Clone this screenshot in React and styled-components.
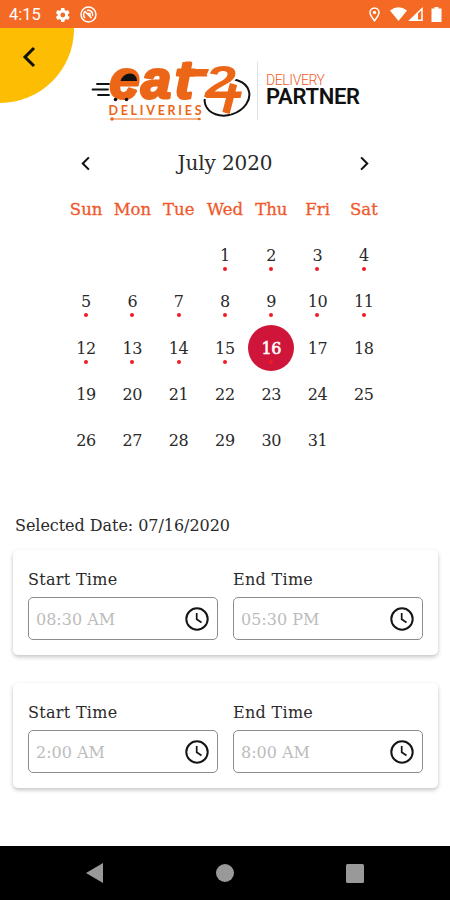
import { useState } from 'react';
import styled, { createGlobalStyle } from 'styled-components';

const colors = {
  main: '#f46a25',
  logo: '#ec6618',
  accent: '#fdbd02',
  weekday: '#f0592a',
  selected: '#d0153a',
  dot: '#f01c24',
  text: '#2a2a2a',
  placeholder: '#bcbcbc',
  border: '#8c8c8c',
  nav: '#999',
};

const slab = "'Roboto Slab', 'DejaVu Serif', serif";

const GlobalStyle = createGlobalStyle`
  * {
    box-sizing: border-box;
  }
  body {
    margin: 0;
    background-color: #fff;
    font-family: ${slab};
    color: ${colors.text};
  }
`
const Screen = styled.div`
  display: flex;
  flex-direction: column;
  width: 450px;
  height: 900px;
  overflow: hidden;
`
const StatusBar = styled.div`
  display: flex;
  flex: none;
  align-items: center;
  height: 28px;
  padding: 1px 7px 0 9px;
  background-color: ${colors.main};
  color: #fff;
  font: 16.5px Roboto, sans-serif;
  svg {
    display: block;
  }
`
const Clock = styled.span`
  width: 45px;
`
const StatusIcons = styled.div`
  display: flex;
  align-items: center;
  gap: ${props => props.$gap}px;
  margin-left: ${props => props.$right ? 'auto' : 0};
`
const Header = styled.div`
  display: flex;
  flex: none;
  height: 112px;
`
const BackButton = styled.button`
  display: flex;
  width: 74px;
  height: 75px;
  padding: 18px 0 0 22px;
  border: none;
  border-radius: 0 0 74px 0;
  background-color: ${colors.accent};
`
const Brand = styled.div`
  display: flex;
  margin: 12px 0 0 14px;
`
const Partner = styled.div`
  height: 58px;
  margin: 22px 0 0 5px;
  padding: 11px 0 0 8px;
  border-left: 1px solid #dfe3e6;
  font-family: Roboto, sans-serif;
  white-space: nowrap;
`
const PartnerTop = styled.div`
  color: ${colors.weekday};
  font-size: 14px;
  font-weight: 300;
  line-height: 14px;
  letter-spacing: -0.4px;
`
const PartnerTitle = styled.div`
  color: #111;
  font-size: 22px;
  font-weight: 600;
  line-height: 19px;
  letter-spacing: -0.3px;
`
const Calendar = styled.div`
  width: 324px;
  margin: 0 auto;
`
const MonthRow = styled.div`
  display: flex;
  align-items: center;
  justify-content: space-between;
  height: 46px;
  padding: 0 17px;
`
const MonthTitle = styled.div`
  font-size: 20px;
  letter-spacing: -0.1px;
`
const MonthButton = styled.button`
  display: flex;
  padding: 0;
  border: none;
  background: none;
`
const Grid = styled.div`
  display: grid;
  grid-template-columns: repeat(7, 46.3px);
  grid-auto-rows: 46.2px;
`
const Weekday = styled.div`
  display: flex;
  align-items: center;
  justify-content: center;
  padding-top: 1px;
  color: ${colors.weekday};
  font-size: 16.5px;
  -webkit-text-stroke: 0.3px ${colors.weekday};
`
const Day = styled.button`
  display: flex;
  flex-direction: column;
  align-items: center;
  width: 46px;
  height: 46px;
  padding: 14px 0 0;
  border: none;
  border-radius: 50%;
  background-color: ${props => props.$active ? colors.selected : 'transparent'};
  color: ${props => props.$active ? '#fff' : colors.text};
  font: 16px/20px ${slab};
  letter-spacing: -0.4px;
  -webkit-text-stroke: ${props => props.$active ? '0.6px #fff' : '0'};
  &::after {
    content: '';
    width: 4px;
    height: 4px;
    margin-top: 1px;
    border-radius: 50%;
    background-color: ${props => props.$marked ? colors.dot : 'transparent'};
  }
`
const SelectedDate = styled.div`
  margin: 52px 0 0 15px;
  font-size: 16px;
  line-height: 22px;
  letter-spacing: -0.05px;
`
const Cards = styled.div`
  display: flex;
  flex-direction: column;
  gap: 28px;
  padding: 13px 12px 0 13px;
`
const Card = styled.div`
  display: flex;
  gap: 15px;
  height: 105px;
  padding: 19px 15px 0;
  border-radius: 5px;
  background-color: #fff;
  box-shadow: 0 2px 4px rgba(0, 0, 0, 0.24);
`
const Field = styled.label`
  flex: 1;
  font-size: 16px;
  line-height: 22px;
  letter-spacing: 0.3px;
`
const TimeBox = styled.div`
  display: flex;
  align-items: center;
  justify-content: space-between;
  height: 43px;
  margin-top: 6px;
  padding: 0 8px 0 7px;
  border: 1px solid ${colors.border};
  border-radius: 5px;
  color: ${colors.placeholder};
  letter-spacing: 0;
`
const TimeText = styled.span`
  padding-top: 2px;
`
const NavBar = styled.div`
  display: flex;
  flex: none;
  align-items: center;
  justify-content: space-between;
  height: 54px;
  margin-top: auto;
  padding: 0 86px;
  background-color: #000;
`

const weekdays = ['Sun', 'Mon', 'Tue', 'Wed', 'Thu', 'Fri', 'Sat'];
const days = Array.from({ length: 31 }, (_, i) => i + 1);

const slots = [
  { start: '08:30 AM', end: '05:30 PM' },
  { start: '2:00 AM', end: '8:00 AM' },
];

const Chevron = ({ width, height, right }) => (
  <svg width={width} height={height} viewBox="0 0 14 22" fill="none" stroke="#111" strokeWidth="3">
    <path d={right ? 'M2 2 L11 11 L2 20' : 'M12 2 L3 11 L12 20'} />
  </svg>
)

const ClockIcon = () => (
  <svg width="24" height="24" viewBox="0 0 24 24" fill="none" stroke="#151515">
    <circle cx="12" cy="12" r="10.7" strokeWidth="2" />
    <path d="M11.7 6 V12.2 L16.5 15.5" strokeWidth="1.7" />
  </svg>
)

const Logo = () => (
  <svg width="164" height="86" viewBox="88 40 164 86">
    <path d="M97 84 H109 M92.5 89.5 H108 M98 95 H109" stroke="#111" strokeWidth="1.8" strokeLinecap="round" />
    <ellipse cx="227" cy="97.5" rx="22.8" ry="17.5" transform="rotate(-18 227 97.5)" fill="none" stroke="#111" strokeWidth="2" />
    <text x="109.5 141 175" y="98" fill={colors.logo} stroke={colors.logo} strokeWidth="3" strokeLinejoin="round"
      fontFamily="'Liberation Sans', sans-serif" fontSize="54" fontWeight="bold" fontStyle="italic">eat</text>
    <path d="M180 69 H209 L207 76.5 H179 Z" fill={colors.logo} />
    <path d="M182.5 62 H192 L190.5 70 H181 Z" fill={colors.logo} />
    <path d="M120.5 81 Q123 73.5 130 73.5 Q136.5 73.5 137 81 Z" fill="#111" />
    <g fill="#111">
      <circle cx="115.5" cy="99.5" r="1.8" />
      <circle cx="126.5" cy="99.5" r="1.8" />
    </g>
    <text x="205" y="97" textLength="31" lengthAdjust="spacingAndGlyphs" fill={colors.logo} stroke="#fff" strokeWidth="4" paintOrder="stroke"
      fontFamily="'Liberation Sans', sans-serif" fontSize="45" fontWeight="bold" fontStyle="italic">2</text>
    <path d="M233.5 84 L226 113" stroke="#fff" strokeWidth="9.5" />
    <path d="M233.5 84 L226 113" stroke={colors.logo} strokeWidth="7.5" />
    <path d="M206 98 L207.5 91.5 H242 L240.5 98 Z" fill={colors.logo} />
    <text x="108.5" y="115" textLength="93" fill={colors.logo} fontFamily="Lato, sans-serif" fontSize="12.5" fontWeight="bold">DELIVERIES</text>
    <path d="M111 119 H201" stroke={colors.logo} strokeWidth="1" />
    <circle cx="112" cy="119" r="1.8" fill={colors.logo} />
    <circle cx="199" cy="119" r="1.3" fill={colors.logo} />
  </svg>
)

const StatusLeft = () => (
  <StatusIcons $gap={10}>
    <svg width="16" height="16" viewBox="3 2 18 20">
      <path fill="#fff" fillRule="evenodd" d="M19.4 13a7.8 7.8 0 0 0 0-2l2.1-1.6-2-3.5-2.5 1a7.6 7.6 0 0 0-1.7-1L15 3.2h-4l-.4 2.7a7.6 7.6 0 0 0-1.7 1l-2.5-1-2 3.5L6.500 11a7.8 7.8 0 0 0 0 2l-2.1 1.6 2 3.5 2.5-1a7.6 7.6 0 0 0 1.7 1l.4 2.7h4l.4-2.7a7.6 7.6 0 0 0 1.7-1l2.5 1 2-3.5zM13 15a3 3 0 1 1 0-6 3 3 0 0 1 0 6z" />
    </svg>
    <svg width="17" height="17" viewBox="0 0 17 17" fill="none" stroke="#fff" strokeWidth="1.5">
      <circle cx="8.5" cy="8.5" r="7.5" />
      <path d="M5 12 A4.5 4.5 0 0 1 5 5.5 L11.5 12 M7 4.5 A4.3 4.3 0 0 1 12.5 10 M7.5 7.5 H10 V10" />
    </svg>
  </StatusIcons>
)

const StatusRight = () => (
  <StatusIcons $gap={2} $right>
    <svg width="19" height="15" viewBox="0 0 19 15" fill="none" stroke="#fff" strokeWidth="1.5">
      <path d="M5.5 13.8 C3 10.5 1 8 1 5.5 a4.5 4.5 0 0 1 9 0 C10 8 8 10.5 5.5 13.8 Z" />
      <circle cx="5.5" cy="5.5" r="1.7" fill="#fff" stroke="none" />
    </svg>
    <svg width="35" height="15" viewBox="0 0 35 15">
      <path d="M0 3.5 Q8.5 -3 17 3.5 L8.5 14 Z" fill="#fff" />
      <path d="M20 13.2 L32 1.8 V13.2 Z" fill="none" stroke="#fff" strokeWidth="1.5" />
      <path d="M20 13.2 L28 5.6 V13.2 Z" fill="#fff" />
    </svg>
    <svg width="16" height="15" viewBox="0 0 16 15">
      <path d="M7.5 0 H11.5 V1.5 H14.5 V15 H4.5 V1.5 H7.5 Z" fill="#fff" />
    </svg>
  </StatusIcons>
)

const TimeField = ({ label, value }) => (
  <Field>
    {label}
    <TimeBox>
      <TimeText>{value}</TimeText>
      <ClockIcon />
    </TimeBox>
  </Field>
)

const App = () => {
  const [selected, setSelected] = useState(16);

  return <Screen>
    <GlobalStyle />
    <StatusBar>
      <Clock>4:15</Clock>
      <StatusLeft />
      <StatusRight />
    </StatusBar>
    <Header>
      <BackButton>
        <Chevron width={14} height={22} />
      </BackButton>
      <Brand>
        <Logo />
        <Partner>
          <PartnerTop>DELIVERY</PartnerTop>
          <PartnerTitle>PARTNER</PartnerTitle>
        </Partner>
      </Brand>
    </Header>
    <Calendar>
      <MonthRow>
        <MonthButton><Chevron width={11} height={15} /></MonthButton>
        <MonthTitle>July 2020</MonthTitle>
        <MonthButton><Chevron width={11} height={15} right /></MonthButton>
      </MonthRow>
      <Grid>
        {weekdays.map(name => <Weekday key={name}>{name}</Weekday>)}
        <span />
        <span />
        <span />
        {days.map(day => (
          <Day key={day} $active={day === selected} $marked={day <= 16} onClick={() => setSelected(day)}>
            {day}
          </Day>
        ))}
      </Grid>
    </Calendar>
    <SelectedDate>Selected Date: 07/{String(selected).padStart(2, '0')}/2020</SelectedDate>
    <Cards>
      {slots.map(slot => (
        <Card key={slot.start}>
          <TimeField label="Start Time" value={slot.start} />
          <TimeField label="End Time" value={slot.end} />
        </Card>
      ))}
    </Cards>
    <NavBar>
      <svg width="17" height="20" viewBox="0 0 17 20"><path d="M0 10 L17 0 V20 Z" fill={colors.nav} /></svg>
      <svg width="18" height="18" viewBox="0 0 18 18"><circle cx="9" cy="9" r="9" fill={colors.nav} /></svg>
      <svg width="18" height="19" viewBox="0 0 18 19"><rect width="18" height="19" rx="1.5" fill={colors.nav} /></svg>
    </NavBar>
  </Screen>
}

export default App;
